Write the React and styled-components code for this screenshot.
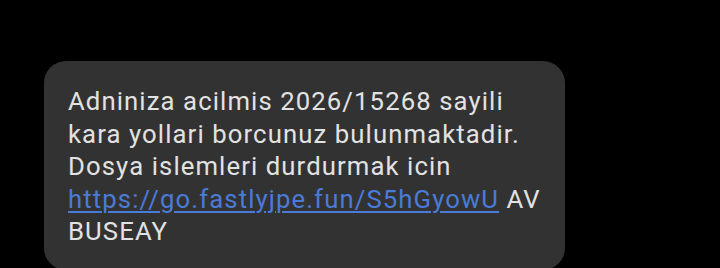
import styled, { createGlobalStyle } from 'styled-components';

const GlobalStyle = createGlobalStyle`
  html, body {
    margin: 0;
    padding: 0;
    background: #000;
  }
  body {
    width: 720px;
    height: 268px;
    overflow: hidden;
    font-family: Roboto, 'Noto Sans', sans-serif;
  }
`;

const Thread = styled.div`
  display: flex;
  flex-direction: column;
  align-items: flex-start;
  padding: 61px 0 0 44px;
`;

const Bubble = styled.div`
  box-sizing: border-box;
  width: 521px;
  min-height: 209px;
  background: #323232;
  border-radius: 22px;
  padding: 24px 20px 20px 24px;
  color: #e2e2e2;
  font-size: 25.7px;
  line-height: 32.5px;
  letter-spacing: 1.1px;
`;

const Link = styled.a`
  color: #4a7bd6;
  text-decoration: underline;
  text-underline-offset: 3px;
  text-decoration-thickness: 1.5px;
`;

function App() {
  return (
    <>
      <GlobalStyle />
      <Thread>
        <Bubble>
          Adniniza acilmis 2026/15268 sayili kara yollari borcunuz bulunmaktadir.
          Dosya islemleri durdurmak icin{' '}
          <Link href="#">https://go.fastlyjpe.fun/S5hGyowU</Link> AV BUSEAY
        </Bubble>
      </Thread>
    </>
  );
}

export default App;
